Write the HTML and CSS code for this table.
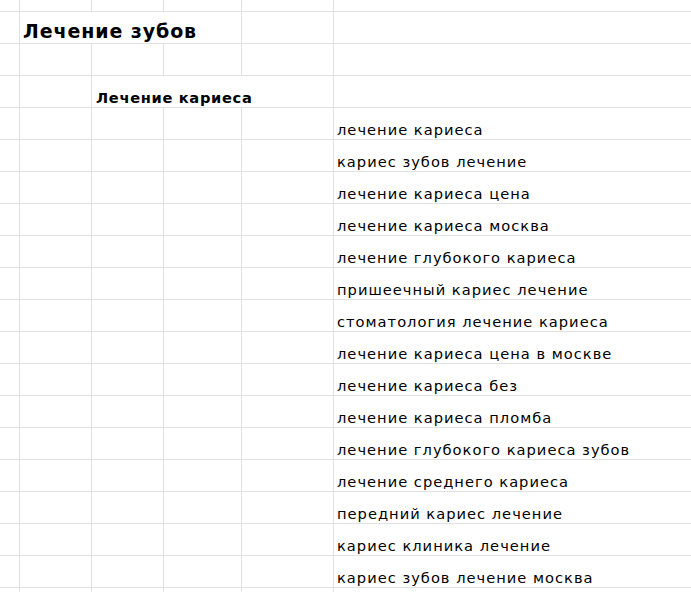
FILE: index.html
```html
<!DOCTYPE html>
<html lang="ru">
<head>
<meta charset="utf-8">
<title>Лечение зубов</title>
<link rel="stylesheet" href="styles.css">
</head>
<body>
<div class="sheet">
  <!-- row 0 (partial) -->
  <div class="cell"></div><div class="cell"></div><div class="cell"></div><div class="cell"></div><div class="cell"></div><div class="cell"></div>
  <!-- title row -->
  <div class="cell"></div>
  <div class="cell span-3 title">Лечение зубов</div>
  <div class="cell"></div><div class="cell"></div>
  <!-- empty row -->
  <div class="cell"></div><div class="cell"></div><div class="cell"></div><div class="cell"></div><div class="cell"></div><div class="cell"></div>
  <!-- subtitle row -->
  <div class="cell"></div><div class="cell"></div>
  <div class="cell span-3 subtitle">Лечение кариеса</div>
  <div class="cell"></div>
  <!-- keyword rows -->
  <div class="cell"></div><div class="cell"></div><div class="cell"></div><div class="cell"></div><div class="cell"></div><div class="cell kw">лечение кариеса</div>
  <div class="cell"></div><div class="cell"></div><div class="cell"></div><div class="cell"></div><div class="cell"></div><div class="cell kw">кариес зубов лечение</div>
  <div class="cell"></div><div class="cell"></div><div class="cell"></div><div class="cell"></div><div class="cell"></div><div class="cell kw">лечение кариеса цена</div>
  <div class="cell"></div><div class="cell"></div><div class="cell"></div><div class="cell"></div><div class="cell"></div><div class="cell kw">лечение кариеса москва</div>
  <div class="cell"></div><div class="cell"></div><div class="cell"></div><div class="cell"></div><div class="cell"></div><div class="cell kw">лечение глубокого кариеса</div>
  <div class="cell"></div><div class="cell"></div><div class="cell"></div><div class="cell"></div><div class="cell"></div><div class="cell kw">пришеечный кариес лечение</div>
  <div class="cell"></div><div class="cell"></div><div class="cell"></div><div class="cell"></div><div class="cell"></div><div class="cell kw">стоматология лечение кариеса</div>
  <div class="cell"></div><div class="cell"></div><div class="cell"></div><div class="cell"></div><div class="cell"></div><div class="cell kw">лечение кариеса цена в москве</div>
  <div class="cell"></div><div class="cell"></div><div class="cell"></div><div class="cell"></div><div class="cell"></div><div class="cell kw">лечение кариеса без</div>
  <div class="cell"></div><div class="cell"></div><div class="cell"></div><div class="cell"></div><div class="cell"></div><div class="cell kw">лечение кариеса пломба</div>
  <div class="cell"></div><div class="cell"></div><div class="cell"></div><div class="cell"></div><div class="cell"></div><div class="cell kw">лечение глубокого кариеса зубов</div>
  <div class="cell"></div><div class="cell"></div><div class="cell"></div><div class="cell"></div><div class="cell"></div><div class="cell kw">лечение среднего кариеса</div>
  <div class="cell"></div><div class="cell"></div><div class="cell"></div><div class="cell"></div><div class="cell"></div><div class="cell kw">передний кариес лечение</div>
  <div class="cell"></div><div class="cell"></div><div class="cell"></div><div class="cell"></div><div class="cell"></div><div class="cell kw">кариес клиника лечение</div>
  <div class="cell"></div><div class="cell"></div><div class="cell"></div><div class="cell"></div><div class="cell"></div><div class="cell kw">кариес зубов лечение москва</div>
  <!-- partial bottom row -->
  <div class="cell"></div><div class="cell"></div><div class="cell"></div><div class="cell"></div><div class="cell"></div><div class="cell"></div>
</div>
</body>
</html>
```
FILE: styles.css
```css
html, body {
  margin: 0;
  padding: 0;
  background: #ffffff;
}

body {
  width: 691px;
  height: 592px;
  overflow: hidden;
  font-family: "DejaVu Sans", "Noto Sans", sans-serif;
  color: #000000;
}

.sheet {
  display: grid;
  grid-template-columns: 20px 72px 72px 78px 92px 360px;
  grid-auto-rows: 32px;
  grid-template-rows: 12px;
  width: 694px;
}

.cell {
  border-right: 1px solid #e2e2e2;
  border-bottom: 1px solid #e2e2e2;
  display: flex;
  align-items: flex-end;
  white-space: nowrap;
  overflow: visible;
  min-width: 0;
}

.span-3 {
  grid-column: span 3;
}

.title {
  font-size: 19px;
  font-weight: 700;
  padding: 0 0 1px 3px;
  letter-spacing: 0.9px;
}

.subtitle {
  font-size: 14.67px;
  font-weight: 700;
  padding: 0 0 1px 4px;
  letter-spacing: 0.65px;
}

.kw {
  font-size: 14.67px;
  padding: 0 0 1px 3px;
  letter-spacing: 1px;
}
```
